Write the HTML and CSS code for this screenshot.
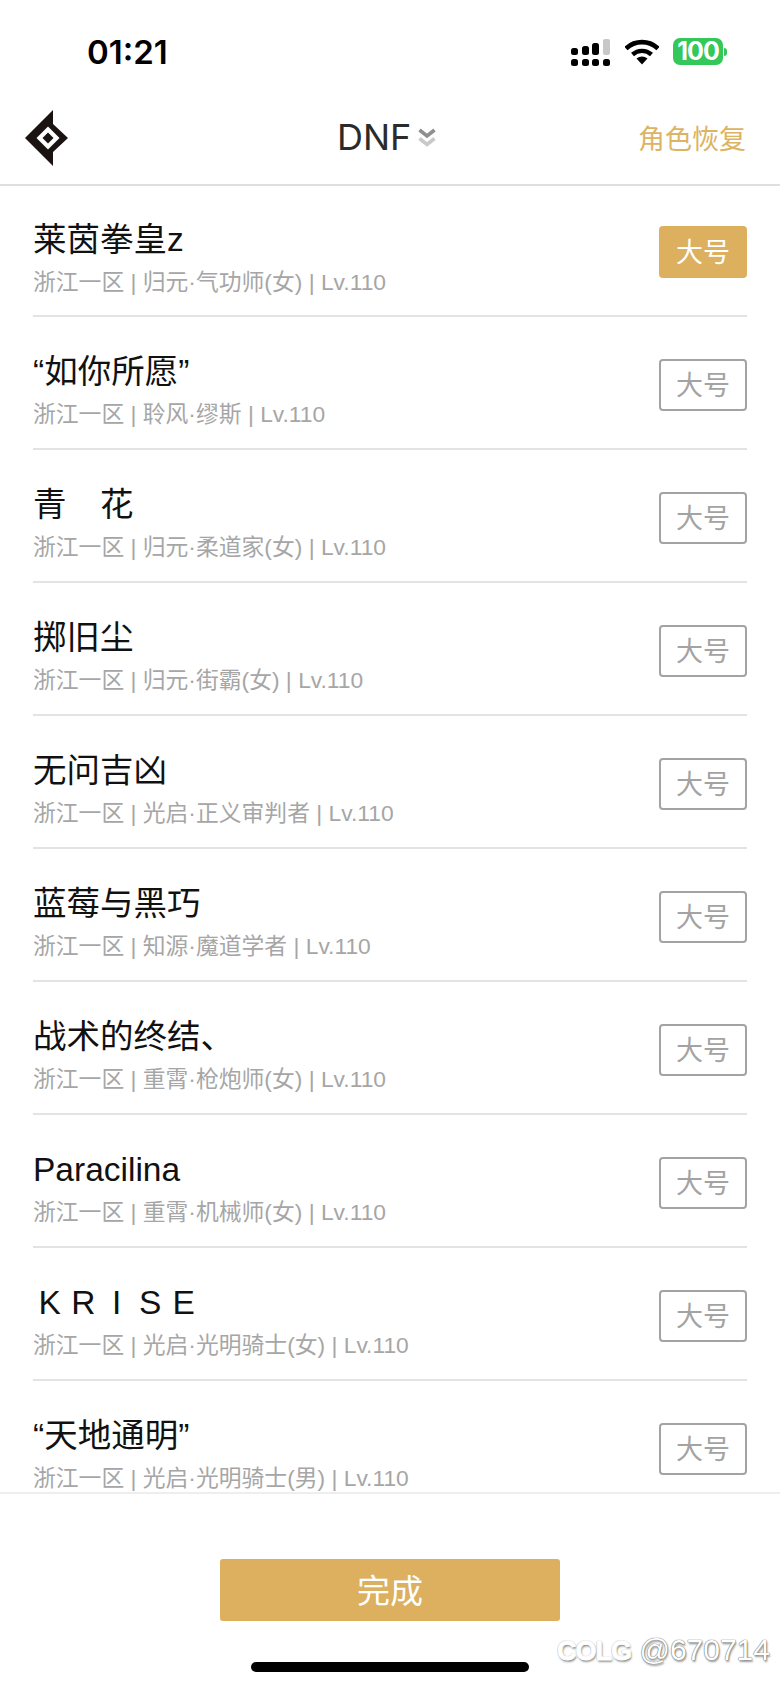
FILE: index.html
```html
<!DOCTYPE html>
<html lang="zh-CN">
<head>
  <meta charset="UTF-8">
  <meta name="viewport" content="width=device-width, initial-scale=1.0">
  <title>角色列表</title>
  <link rel="stylesheet" href="styles.css">
</head>
<body>

  <div class="statusBar">
    <span class="time">01:21</span>
    <div class="statusIcons">
      <svg class="signal" width="40" height="28" viewBox="0 0 40 28">
        <rect x="1" y="10" width="7" height="7" rx="2.5" fill="#000"/>
        <rect x="12" y="8" width="7" height="9" rx="2.5" fill="#000"/>
        <rect x="22" y="5" width="7" height="12" rx="2.5" fill="#000"/>
        <rect x="33" y="1" width="7" height="16" rx="2" fill="#c8c8c8"/>
        <rect x="1" y="21" width="7" height="7" rx="2.5" fill="#000"/>
        <rect x="12" y="21" width="7" height="7" rx="2.5" fill="#000"/>
        <rect x="22" y="21" width="7" height="7" rx="2.5" fill="#000"/>
        <rect x="33" y="21" width="7" height="7" rx="2.5" fill="#000"/>
      </svg>
      <svg class="wifi" width="34" height="26" viewBox="0 0 34 26">
        <path d="M1 9.5 C10 1 24 1 33 9.5" fill="none" stroke="#000" stroke-width="4.6"/>
        <path d="M7.5 15.5 C13 10.6 21 10.6 26.5 15.5" fill="none" stroke="#000" stroke-width="4.4"/>
        <path d="M11.5 19.5 C15 16.8 19 16.8 22.5 19.5 L17 25.5 Z" fill="#000"/>
      </svg>
      <div class="battery">
        <span class="batteryBody">100</span>
        <span class="batteryNub"></span>
      </div>
    </div>
  </div>

  <div class="navBar">
    <svg class="logo" width="45" height="56" viewBox="0 0 45 56">
      <path d="M29 0 L29 14 L44 28 L29 42 L29 56 L1 28 Z" fill="#1a1311"/>
      <path d="M24 16.5 L35.5 28 L24 39.5 L12.5 28 Z" fill="#fff"/>
      <path d="M24 22.5 L29.5 28 L24 33.5 L18.5 28 Z" fill="#1a1311"/>
    </svg>
    <div class="navTitle">
      <span>DNF</span>
      <svg width="18" height="20" viewBox="0 0 18 20">
        <path d="M1.5 2 L9 8 L16.5 2" fill="none" stroke="#8f8f8f" stroke-width="3.6"/>
        <path d="M1.5 10.5 L9 16.5 L16.5 10.5" fill="none" stroke="#c9c9c9" stroke-width="3.6"/>
      </svg>
    </div>
    <a class="navAction">角色恢复</a>
  </div>

  <div class="roleList">
    <div class="role">
      <div class="roleInfo">
        <div class="roleName">莱茵拳皇z</div>
        <div class="roleDesc">浙江一区 | 归元·气功师(女) | Lv.110</div>
      </div>
      <button class="tag tagActive">大号</button>
    </div>
    <div class="role">
      <div class="roleInfo">
        <div class="roleName">“如你所愿”</div>
        <div class="roleDesc">浙江一区 | 聆风·缪斯 | Lv.110</div>
      </div>
      <button class="tag">大号</button>
    </div>
    <div class="role">
      <div class="roleInfo">
        <div class="roleName">青　花</div>
        <div class="roleDesc">浙江一区 | 归元·柔道家(女) | Lv.110</div>
      </div>
      <button class="tag">大号</button>
    </div>
    <div class="role">
      <div class="roleInfo">
        <div class="roleName">掷旧尘</div>
        <div class="roleDesc">浙江一区 | 归元·街霸(女) | Lv.110</div>
      </div>
      <button class="tag">大号</button>
    </div>
    <div class="role">
      <div class="roleInfo">
        <div class="roleName">无问吉凶</div>
        <div class="roleDesc">浙江一区 | 光启·正义审判者 | Lv.110</div>
      </div>
      <button class="tag">大号</button>
    </div>
    <div class="role">
      <div class="roleInfo">
        <div class="roleName">蓝莓与黑巧</div>
        <div class="roleDesc">浙江一区 | 知源·魔道学者 | Lv.110</div>
      </div>
      <button class="tag">大号</button>
    </div>
    <div class="role">
      <div class="roleInfo">
        <div class="roleName">战术的终结、</div>
        <div class="roleDesc">浙江一区 | 重霄·枪炮师(女) | Lv.110</div>
      </div>
      <button class="tag">大号</button>
    </div>
    <div class="role">
      <div class="roleInfo">
        <div class="roleName">Paracilina</div>
        <div class="roleDesc">浙江一区 | 重霄·机械师(女) | Lv.110</div>
      </div>
      <button class="tag">大号</button>
    </div>
    <div class="role">
      <div class="roleInfo">
        <div class="roleName"><span class="wideChar">K</span><span class="wideChar">R</span><span class="wideChar">I</span><span class="wideChar">S</span><span class="wideChar">E</span></div>
        <div class="roleDesc">浙江一区 | 光启·光明骑士(女) | Lv.110</div>
      </div>
      <button class="tag">大号</button>
    </div>
    <div class="role">
      <div class="roleInfo">
        <div class="roleName">“天地通明”</div>
        <div class="roleDesc">浙江一区 | 光启·光明骑士(男) | Lv.110</div>
      </div>
      <button class="tag">大号</button>
    </div>
  </div>

  <div class="footer">
    <button class="doneButton">完成</button>
    <div class="homeBar"></div>
  </div>

  <div class="watermark"><b class="watermarkLogo">COLG</b> @670714</div>

</body>
</html>
```

FILE: styles.css
```css
html, body {
  margin: 0;
  padding: 0;
}

body {
  position: relative;
  width: 780px;
  height: 1688px;
  display: flex;
  flex-direction: column;
  overflow: hidden;
  background-color: #fff;
  color: #000;
  font-family: "Liberation Sans", "Noto Sans CJK SC", sans-serif;
}

/* Status bar */
.statusBar {
  height: 100px;
  flex: none;
  display: flex;
  justify-content: space-between;
  align-items: flex-start;
  padding: 32px 53px 0 87px;
  box-sizing: border-box;
}

.time {
  font-family: "Inter", sans-serif;
  font-weight: 600;
  font-size: 33px;
  line-height: 40px;
}

.statusIcons {
  display: flex;
  align-items: flex-start;
  margin-top: 6px;
}

.signal {
  margin-right: 15px;
}

.wifi {
  margin-top: 1px;
  margin-right: 14px;
}

.battery {
  display: flex;
  align-items: center;
}

.batteryBody {
  width: 50px;
  height: 27px;
  background-color: #34c759;
  border-radius: 7px;
  color: #fff;
  font-family: "Inter", sans-serif;
  font-weight: 700;
  font-size: 25px;
  line-height: 27px;
  text-align: center;
  letter-spacing: -1px;
}

.batteryNub {
  width: 3px;
  height: 8px;
  margin-left: 1px;
  background-color: #34c759;
  border-radius: 0 3px 3px 0;
}

/* Nav bar */
.navBar {
  position: relative;
  height: 86px;
  flex: none;
  display: flex;
  justify-content: space-between;
  align-items: center;
  padding: 0 34px 0 24px;
  box-sizing: border-box;
  border-bottom: 2px solid #dfdfdf;
}

.logo {
  margin-bottom: 8px;
}

.navTitle {
  position: absolute;
  left: 337px;
  top: 15px;
  display: flex;
  align-items: center;
  gap: 7px;
  color: #2b2b2b;
  font-family: "Inter", sans-serif;
  font-size: 36px;
  line-height: 44px;
}

.navTitle svg {
  margin-top: 1px;
}

.navAction {
  margin-bottom: 10px;
  color: #dcb463;
  font-size: 27px;
}

/* Role list */
.roleList {
  flex: 1;
  overflow: hidden;
  border-bottom: 2px solid #eeeeee;
}

.role {
  height: 133px;
  margin: 0 33px;
  box-sizing: border-box;
  display: flex;
  justify-content: space-between;
  align-items: center;
  border-bottom: 2px solid #e3e3e3;
}

.role:first-child {
  height: 131px;
}

.roleInfo {
  padding-top: 14px;
}

.roleName {
  font-size: 33.5px;
  line-height: 44px;
  color: #111;
}

.wideChar {
  display: inline-block;
  width: 1em;
  text-align: center;
}

.roleDesc {
  margin-top: 4px;
  font-size: 22.8px;
  line-height: 32px;
  color: #a6a6a6;
}

.tag {
  width: 88px;
  height: 52px;
  margin-top: 4px;
  padding: 0 0 2px;
  box-sizing: border-box;
  background-color: #fff;
  border: 2px solid #a3a3a3;
  border-radius: 4px;
  color: #a3a3a3;
  font-family: inherit;
  font-size: 27px;
}

.tagActive {
  margin-top: 2px;
  background-color: #dcb05f;
  border-color: #dcb05f;
  color: #fff;
}

/* Footer */
.footer {
  height: 194px;
  flex: none;
  display: flex;
  flex-direction: column;
  align-items: center;
}

.doneButton {
  width: 340px;
  height: 62px;
  margin-top: 65px;
  padding: 0 0 3px;
  background-color: #dcb05f;
  border: none;
  border-radius: 3px;
  color: #fff;
  font-family: inherit;
  font-size: 33px;
}

.homeBar {
  width: 278px;
  height: 10px;
  margin-top: 41px;
  background-color: #000;
  border-radius: 5px;
}

/* Watermark sits over the page */
.watermark {
  position: absolute;
  right: 10px;
  bottom: 20px;
  color: #fff;
  font-family: "Liberation Sans", sans-serif;
  font-size: 30px;
  line-height: 34px;
  text-shadow: 0 0 1px #666, 0 0 1px #666, 1px 2px 2px #999;
}

.watermarkLogo {
  font-size: 27px;
  letter-spacing: -1px;
  -webkit-text-stroke: 1px #fff;
}
```
